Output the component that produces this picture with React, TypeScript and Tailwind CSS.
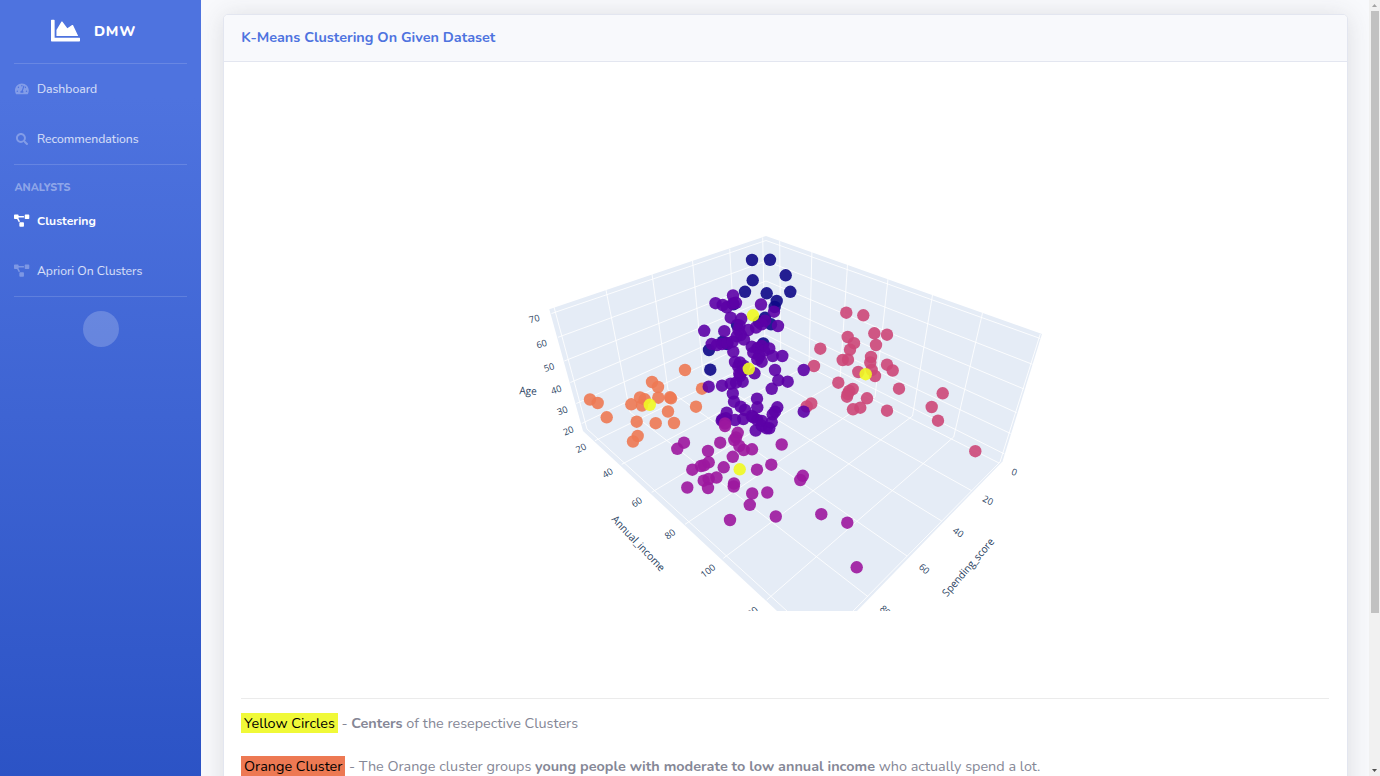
import { FaChartArea, FaProjectDiagram, FaSearch, FaTachometerAlt } from 'react-icons/fa';
import type { ReactNode } from 'react';

type Point = [number, number];
type Line = [number, number, number, number];

const orange: Point[] = [
  [590, 399.5], [597.7, 403], [606.7, 417.3], [631.3, 404.3], [640, 397.5], [644.7, 399.3], [642, 405.5],
  [652, 382], [658, 387], [658.3, 397.7], [670, 397.3], [671, 398.3], [668, 411.5], [636.7, 421.7],
  [655.7, 423.2], [674, 423], [685, 370], [702, 388.7], [696, 406.7], [637.7, 436], [633, 441.5],
];
const pink: Point[] = [
  [846.3, 312.7], [863.3, 315.3], [847.7, 337], [854, 343.2], [850, 349.7], [874.3, 333.3], [887, 334.7],
  [876, 345], [820.3, 348.7], [814, 366], [842.7, 360], [848, 359.7], [871, 357], [870.3, 362.5],
  [887, 364.7], [892.7, 370.5], [858.3, 372], [871.7, 370], [875, 376], [838.3, 382.7], [899, 388.7],
  [852.7, 389], [849.3, 391], [847.7, 394], [847, 396.7], [867, 398.3], [860.3, 407.7], [853, 409.3],
  [887, 410.7], [942.7, 393.3], [931.7, 407], [938, 420.7], [975.3, 451.2], [811.3, 403.5], [806.7, 406.5],
];
const navy: Point[] = [
  [752, 260], [770, 259.8], [785.7, 275.3], [752.7, 280.3], [790.3, 291.8], [745, 291.8], [766.7, 293.3],
  [776.7, 301], [774.7, 307], [765, 317.8], [771, 324.3], [733.5, 304.3], [763.3, 343.5], [709, 350],
  [710.3, 369.7], [737, 325], [722.7, 341.7], [727, 344], [759, 322],
];
const purple: Point[] = [
  [733, 295.5], [715.5, 303.2], [722.7, 305], [726.7, 307.3], [733, 303.5], [736, 302.8], [761, 304.5],
  [774, 311.7], [730.7, 317.7], [741.3, 318.8], [704.2, 330.8], [724.3, 331.2], [778, 326], [765, 320.7],
  [761.7, 324.3], [756, 327.5], [748.3, 330], [739.5, 325.5], [738.5, 330], [740.7, 335], [736.7, 336.3],
  [744, 339.5], [711.7, 344], [717, 345], [722, 344], [727.5, 343], [732.7, 341.7], [733.3, 351.7],
  [735, 362], [751.7, 346.7], [757.3, 348.3], [761.7, 346], [764, 350.8], [769.3, 348.5], [753.3, 352.7],
  [759.3, 356], [761.7, 361.7], [757.3, 359.3], [772.7, 356], [782.3, 356], [775, 370], [803.7, 370],
  [740, 362.5], [738.3, 366.7], [744, 366], [754.5, 373.3], [739.3, 373.5], [743.3, 370.7], [778.3, 380.3],
  [787.7, 381.7], [771.7, 388.8], [708.7, 386.7], [722, 385.7], [730.7, 383.7], [736, 382.7],
  [742.7, 381.7], [740, 376], [732.8, 393.5], [734, 401.7], [740.7, 406.7], [745, 410], [757, 398.7],
  [757.3, 407.3], [726.7, 412.7], [722.5, 419.3], [721.7, 420.7], [726, 418.3], [735, 420],
  [743.3, 419], [751.7, 416], [757.3, 420], [753.3, 417.3], [761.7, 421], [755.7, 430.5],
  [761.7, 425.7], [766.7, 428.3], [769.3, 428.3], [771.7, 422.3], [772.7, 414.3], [777.3, 407.3],
  [775, 411.7], [803.7, 411.7],
];
const magenta: Point[] = [
  [725, 423.5], [725, 426], [737.7, 432.8], [736, 437.5], [734.3, 440], [739.3, 446], [743.7, 450],
  [752, 449.3], [720.2, 442.7], [684, 442.7], [677.3, 448.8], [708, 451], [732.8, 456.8], [781.7, 444.5],
  [771.3, 464.7], [692.3, 469.7], [701, 466], [704, 465.3], [708.7, 462.3], [723.7, 467.3], [757, 469.7],
  [703.7, 480.7], [708.7, 479], [716.5, 477.5], [708, 488], [687.3, 487.5], [734, 483.5], [733.7, 486.5],
  [752.2, 493.5], [767.3, 492.5], [749.8, 504.8], [730, 520], [775.8, 516.5], [821.3, 514.2],
  [802.8, 475.8], [800.3, 480], [847.3, 522.7], [856.7, 567.3],
];
const centers: Point[] = [[753, 315.3], [748.8, 368.8], [739.7, 469.3], [865.7, 374.2], [649.8, 404.8]];

const clusters = [
  { points: orange, color: '#ed7953' },
  { points: pink, color: '#cc4778' },
  { points: navy, color: '#0d0887' },
  { points: purple, color: '#5c01a6' },
  { points: magenta, color: '#9c179e' },
  { points: centers, color: '#f0f921' },
];

const grid: Line[] = [
  // spending score: left wall, then floor
  [554, 307, 587, 429], [606, 290, 630, 412], [652, 274, 668, 390], [692.5, 260.7, 703, 374],
  [729.7, 248.7, 736, 359], [762.7, 237.5, 765, 345],
  [587, 429, 787, 611], [630, 412, 868, 596.7], [668, 390, 907, 556], [703, 374, 941.7, 521],
  [736, 359, 971.7, 490.7], [765, 345, 999, 463],
  // annual income: right wall, then floor
  [779.7, 241, 780.7, 350], [811.9, 252, 809, 365], [847.5, 264.5, 840, 380], [888, 279, 875, 397],
  [932.5, 295, 912.5, 416], [982.5, 313, 953.7, 437], [1040.3, 334, 1000, 462],
  [595, 440.7, 780.7, 350], [621.7, 464.3, 809, 365], [651.7, 492.3, 840, 380], [685, 524.3, 875, 397],
  [723.3, 558.3, 912.5, 416], [766.7, 600, 953.7, 437], [1000, 462, 853, 611],
  // age
  [551.5, 313.5, 766, 240.5], [766, 240.5, 1040.3, 338.5],
  [558, 337.3, 766, 261], [766, 261, 1032.5, 364.3],
  [564.3, 361, 766, 281], [766, 281, 1024, 389],
  [570.3, 382.5, 766, 300], [766, 300, 1016.7, 412.7],
  [576.3, 403.5, 766, 318], [766, 318, 1010.5, 433.5],
  [581.7, 423.5, 766, 335], [766, 335, 1004.5, 454],
];

const ticks: [string, number, number, number][] = [
  ['70', 534.3, 318.7, -15], ['60', 541.7, 343.8, -16], ['50', 549, 367.3, -17], ['40', 556.3, 389.7, -18],
  ['30', 562.3, 410.7, -20], ['20', 568.3, 430.8, -22],
  ['20', 581, 448, -27], ['40', 607.5, 473, -31], ['60', 636.7, 502, -34], ['80', 670, 534, -37],
  ['100', 708, 570.7, -38], ['120', 750.5, 613.5, -40],
  ['0', 1014.3, 472, 20], ['20', 988, 500.3, 27], ['40', 958.3, 532.3, 35], ['60', 924.3, 568.7, 42],
  ['80', 885.3, 610.5, 42],
];

const titles: [string, number, number, number, number][] = [
  ['Age', 528, 391, 2, 17.5], ['Annual_income', 638.3, 543.5, 46.5, 72], ['Spending_score', 968.3, 567.3, -49, 73],
];

function ScatterPlot() {
  return (
    <svg width="542" height="391" viewBox="510 220 542 391" className="block font-['Open_Sans',sans-serif]">
      <polygon points="766,236 1042,334 1002.5,461.5 857,611 777,611 583,431 549.3,309.3" fill="#e5ecf6" />
      <g stroke="#fff" strokeWidth="1" strokeOpacity=".85">
        {grid.map(([x1, y1, x2, y2], i) => <line key={i} x1={x1} y1={y1} x2={x2} y2={y2} />)}
      </g>
      {clusters.map(({ points, color }) => (
        <g key={color} fill={color} fillOpacity=".9">
          {points.map(([x, y], i) => <circle key={i} cx={x} cy={y} r="6.2" />)}
        </g>
      ))}
      <g fill="#2a3f5f" textAnchor="middle">
        {ticks.map(([label, x, y, angle]) => (
          <text key={`${label}-${x}`} fontSize="9.2" transform={`translate(${x} ${y}) rotate(${angle})`} y="3.3">{label}</text>
        ))}
        {titles.map(([label, x, y, angle, width]) => (
          <text key={label} fontSize="10.6" textLength={width} lengthAdjust="spacingAndGlyphs" transform={`translate(${x} ${y}) rotate(${angle})`} y="3.6">{label}</text>
        ))}
      </g>
    </svg>
  );
}

function NavItem({ icon, children, active = false }: { icon: ReactNode; children: ReactNode; active?: boolean }) {
  return (
    <a className={`flex h-[50.2px] shrink-0 items-center px-[14.4px] text-[12.24px] ${active ? 'font-bold text-white' : 'text-white/80'}`}>
      <span className={`flex w-[15px] shrink-0 justify-center ${active ? 'text-white' : 'text-white/30'}`}>{icon}</span>
      <span className="ml-[7.5px]">{children}</span>
    </a>
  );
}

function Divider() {
  return <div className="mx-[14.4px] h-px shrink-0 bg-white/15" />;
}

function Sidebar() {
  return (
    <aside className="flex h-[970px] w-[201px] shrink-0 flex-col bg-[linear-gradient(180deg,#4e73df_10%,#224abe_100%)]">
      <div className="flex h-[63px] shrink-0 items-center pl-[51px] text-white">
        <FaChartArea className="mt-[-3px] size-[29px]" />
        <span className="ml-[14px] text-[14.4px] font-extrabold tracking-[0.72px]">DMW</span>
      </div>
      <Divider />
      <NavItem icon={<FaTachometerAlt className="size-[13.8px] shrink-0" />}>Dashboard</NavItem>
      <NavItem icon={<FaSearch className="size-[12.2px] shrink-0" />}>Recommendations</NavItem>
      <Divider />
      <h2 className="mt-[15px] h-[15.3px] shrink-0 px-[14.4px] text-[10.8px] leading-[15px] font-extrabold text-white/40">ANALYSTS</h2>
      <NavItem active icon={<FaProjectDiagram className="size-[15.3px] shrink-0" />}>Clustering</NavItem>
      <NavItem icon={<FaProjectDiagram className="size-[15.3px] shrink-0" />}>Apriori On Clusters</NavItem>
      <Divider />
      <button aria-label="Collapse sidebar" className="mx-auto mt-[14px] size-9 shrink-0 rounded-full bg-white/20" />
    </aside>
  );
}

function Scrollbar() {
  return (
    <div className="flex h-[776px] w-[11px] shrink-0 flex-col items-center bg-[#f1f1f1]">
      <svg width="11" height="11" viewBox="0 0 11 11" className="shrink-0"><path d="M3 7h5L5.5 4z" fill="#a3a3a3" /></svg>
      <div className="h-[602px] w-[8px] bg-[#c1c1c1]" />
      <svg width="11" height="11" viewBox="0 0 11 11" className="mt-auto shrink-0"><path d="M3 4h5L5.5 7z" fill="#505050" /></svg>
    </div>
  );
}

export default function App() {
  return (
    <div className="flex h-[776px] w-[1380px] overflow-hidden bg-[#f8f9fc] font-[Nunito,Lato,sans-serif]">
      <Sidebar />
      <main className="min-w-0 flex-1 pt-[14px] pr-[21.4px] pl-[22px]">
        <section className="h-[900px] rounded-[5px] border border-[#e3e6f0] bg-white shadow-[0_2px_25px_rgba(58,59,69,0.15)]">
          <header className="flex h-[47px] items-center rounded-t-[4px] border-b border-[#e3e6f0] bg-[#f8f9fc] px-[17.3px]">
            <h1 className="text-[14.4px] font-bold text-[#4e73df]">K-Means Clustering On Given Dataset</h1>
          </header>
          <div className="pr-[17.5px] pl-[17.2px] text-[14.4px] text-[#858796]">
            <div className="flex h-[636px] justify-start pt-[158px] pl-[268.8px]">
              <ScatterPlot />
            </div>
            <hr className="border-t border-black/8" />
            <p className="mt-[13px] h-[22px] leading-[22px]">
              <mark className="inline-block h-[20px] bg-[#f0f938] px-[2.88px] leading-[20px] text-black">Yellow Circles</mark> - <b>Centers</b> of the resepective Clusters
            </p>
            <p className="mt-[21px] h-[22px] leading-[22px]">
              <mark className="inline-block h-[20px] bg-[#ed7953] px-[2.88px] leading-[20px] text-black">Orange Cluster</mark> - The Orange cluster groups <b>young people with moderate to low annual income</b> who actually spend a lot.
            </p>
          </div>
        </section>
      </main>
      <Scrollbar />
    </div>
  );
}
